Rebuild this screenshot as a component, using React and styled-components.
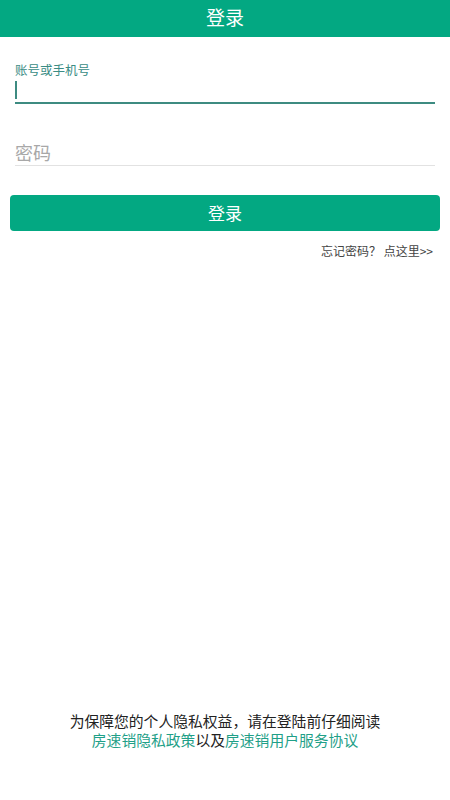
import React from "react";
import styled, { createGlobalStyle } from "styled-components";

const GlobalStyle = createGlobalStyle`
  html, body {
    margin: 0;
    padding: 0;
    background: #ffffff;
  }
  body {
    font-family: "Noto Sans CJK SC", "Noto Sans", sans-serif;
  }
`;

const Page = styled.div`
  width: 450px;
  height: 800px;
  display: flex;
  flex-direction: column;
  background: #ffffff;
  overflow: hidden;
`;

const Header = styled.div`
  height: 37px;
  box-sizing: border-box;
  padding-bottom: 4px;
  flex-shrink: 0;
  background: #03a882;
  color: #ffffff;
  font-size: 19px;
  display: flex;
  align-items: center;
  justify-content: center;
  line-height: 1;
`;

const Form = styled.div`
  display: flex;
  flex-direction: column;
  padding: 0 15px;
`;

const Field = styled.div`
  display: flex;
  flex-direction: column;
  margin-top: ${(p) => p.top}px;
  border-bottom: ${(p) => (p.active ? "2px solid #3d8b81" : "1px solid #e2e2e2")};
`;

const Label = styled.div`
  font-size: 12.5px;
  color: #3a8c84;
  line-height: 16px;
`;

const InputRow = styled.div`
  height: ${(p) => p.h}px;
  display: flex;
  align-items: center;
`;

const Cursor = styled.span`
  width: 2px;
  height: 18px;
  background: #3d8b81;
`;

const Placeholder = styled.span`
  font-size: 18px;
  color: #a8a8a8;
  line-height: 1;
`;

const Button = styled.button`
  margin: 29px 10px 0;
  height: 36px;
  border: none;
  border-radius: 4px;
  background: #03a882;
  color: #ffffff;
  font-family: inherit;
  font-size: 17px;
  padding: 0 0 2px;
`;

const Forgot = styled.div`
  align-self: flex-end;
  margin: 12px 17px 0 0;
  font-size: 12px;
  color: #444444;
  line-height: 16px;
`;

const Spacer = styled.div`
  flex: 1;
`;

const Notice = styled.div`
  text-align: center;
  font-size: 14.8px;
  line-height: 19px;
  color: #222222;
  padding-bottom: 51px;
`;

const Link = styled.span`
  color: #1fa088;
`;

export default function App() {
  return (
    <Page>
      <GlobalStyle />
      <Header>登录</Header>
      <Form>
        <Field top={25} active>
          <Label>账号或手机号</Label>
          <InputRow h={24}>
            <Cursor />
          </InputRow>
        </Field>
        <Field top={34}>
          <InputRow h={27}>
            <Placeholder>密码</Placeholder>
          </InputRow>
        </Field>
      </Form>
      <Button>登录</Button>
      <Forgot>忘记密码？ 点这里&gt;&gt;</Forgot>
      <Spacer />
      <Notice>
        <div>为保障您的个人隐私权益，请在登陆前仔细阅读</div>
        <div>
          <Link>房速销隐私政策</Link>以及<Link>房速销用户服务协议</Link>
        </div>
      </Notice>
    </Page>
  );
}
